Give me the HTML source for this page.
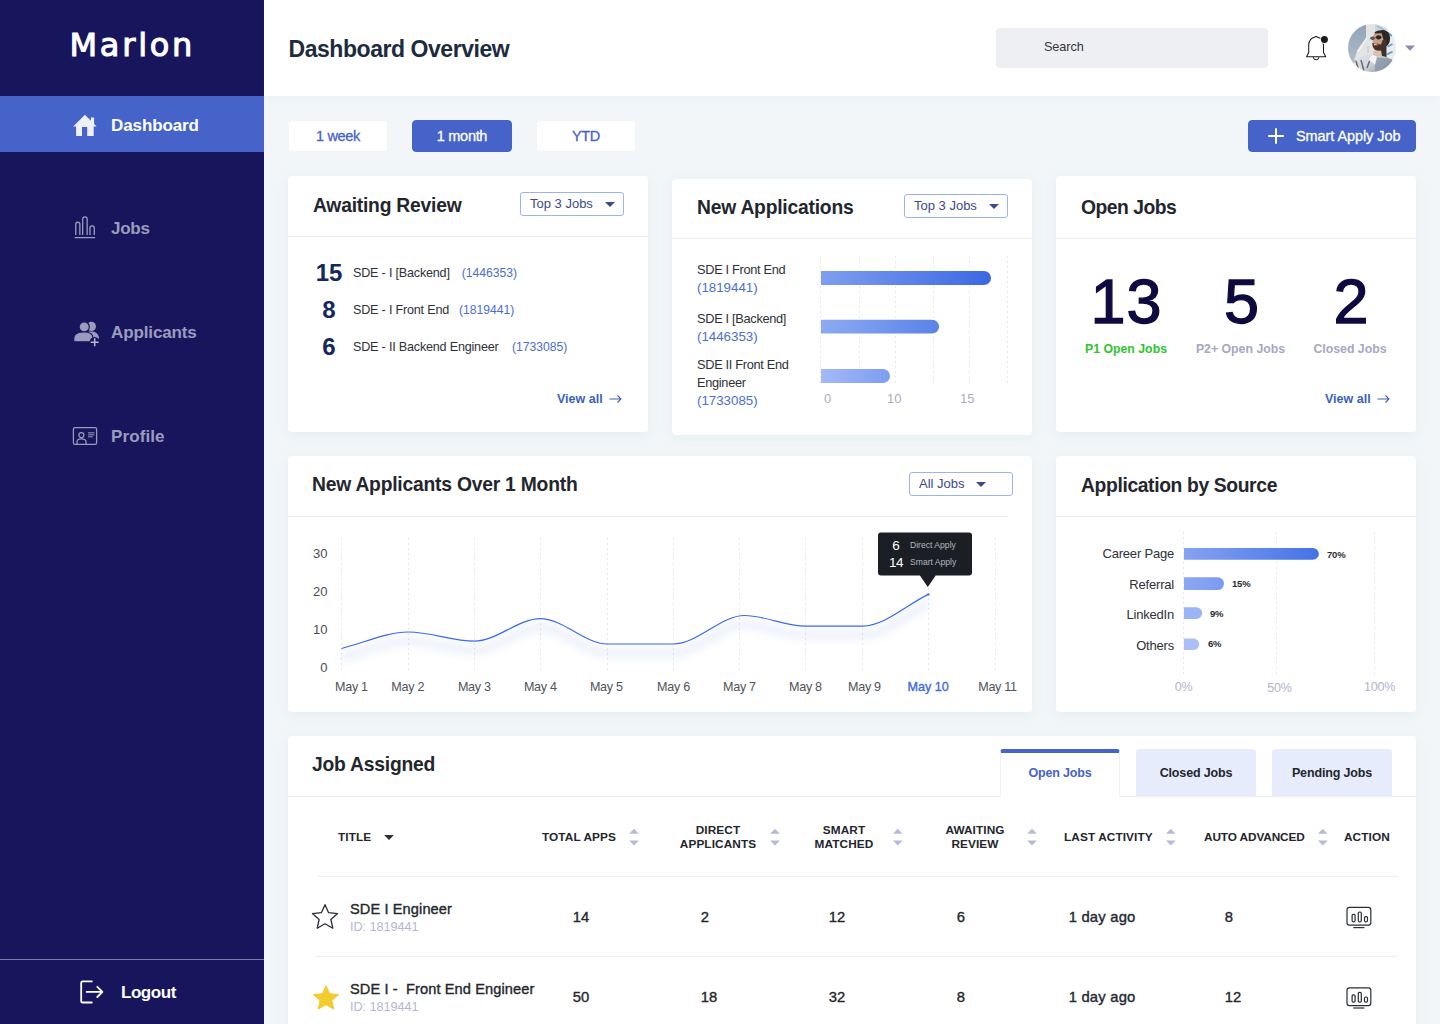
<!DOCTYPE html>
<html lang="en">
<head>
<meta charset="utf-8">
<title>Marlon - Dashboard Overview</title>
<style>
*{box-sizing:border-box;margin:0;padding:0}
html,body{width:1440px;height:1024px;overflow:hidden}
body{font-family:"Liberation Sans",Arial,sans-serif;background:#f2f6f9;color:#23262d;position:relative}
.abs{position:absolute}
.t{position:absolute;white-space:nowrap;line-height:1}
/* sidebar */
#side{position:absolute;left:0;top:0;width:264px;height:1024px;background:#17165d}
#side .active{position:absolute;left:0;top:96px;width:264px;height:56px;background:#4563c9}
#side .logo{left:69.5px;top:29px;font-family:"DejaVu Sans","Liberation Sans",sans-serif;font-size:32px;color:#fff;letter-spacing:2.75px;font-weight:400;-webkit-text-stroke:1.05px #fff}
#side .nav{font-size:17px;font-weight:700;color:#9b9cbd;left:111px}
#side .logoutline{position:absolute;left:0;top:959px;width:264px;height:1px;background:#7a79a8}
/* header */
#head{position:absolute;left:264px;top:0;width:1176px;height:96px;background:#fff;box-shadow:0 2px 8px rgba(120,140,170,.06)}
#head .title{left:24.5px;top:38px;font-size:23px;font-weight:700;color:#1d2b3e;letter-spacing:-0.45px}
#search{position:absolute;left:996px;top:28px;width:272px;height:40px;background:#eeeff3;border-radius:4px}
/* buttons */
.btn{position:absolute;top:120px;height:32px;width:100px;border-radius:4px;background:#fff;border:1px solid #f1f3f7;color:#4563c9;font-size:14.5px;text-align:center;line-height:30px;letter-spacing:-0.3px;-webkit-text-stroke:0.3px currentColor}
.btn.on{background:#4563c9;border-color:#4563c9;color:#fff}
/* cards */
.card{position:absolute;background:#fff;border-radius:4px;box-shadow:0 2px 10px rgba(195,208,222,.26)}
.card .hl{position:absolute;left:0;right:0;height:1px;background:#ecedf0}
.ctitle{font-size:19.3px;font-weight:700;color:#23262d;letter-spacing:-0.22px}
.dd{position:absolute;height:24px;border:1px solid #9db3ee;border-radius:3px;background:#fff;font-size:13px;color:#3c4a8a;line-height:22px;padding-left:9px}
.dd i{position:absolute;top:9px;width:0;height:0;border-left:5px solid transparent;border-right:5px solid transparent;border-top:5px solid #3c4a8a}
.viewall{font-size:12.5px;font-weight:700;color:#3d5fc4}
.num{font-weight:700;font-size:24px;color:#14275e;text-align:center}
.row{font-size:12.6px;color:#2e3138;letter-spacing:-0.2px}
.row span{color:#4a6fd0;font-size:12.15px;letter-spacing:0}
.lab{font-size:12.8px;color:#2e3138;letter-spacing:-0.32px}
.lab.b{color:#4a6fd0;font-size:13.3px;letter-spacing:0}
.big{font-size:63px;color:#0d0a3f;text-align:center;-webkit-text-stroke:1.3px #0d0a3f;letter-spacing:1px}
.sub{font-size:12.3px;font-weight:700;color:#a6a7c3;text-align:center}
.tab{position:absolute;width:120px;height:47px;background:#e6ecfb;border-radius:3px 3px 0 0;font-size:12.5px;font-weight:700;color:#23262d;text-align:center;line-height:48.5px;letter-spacing:-0.15px}
.tab.on{background:#fff;color:#4563c9;border:1px solid #f0f1f5;border-bottom:none;border-top:4px solid #4563c9;line-height:40px;height:48px}
.th{font-size:11.8px;font-weight:700;color:#23262d;letter-spacing:0.1px;line-height:14px}
.th.c{text-align:center}
.jt{font-size:14.6px;color:#23262d;letter-spacing:0.1px;-webkit-text-stroke:0.35px #23262d}
.jid{font-size:12.6px;color:#b3b7d3}
.td{font-size:14.8px;color:#23262d;letter-spacing:0.2px;-webkit-text-stroke:0.35px #23262d}
</style>
</head>
<body>

<!-- SIDEBAR -->
<div id="side">
  <div class="t logo">Marlon</div>
  <div class="active"></div>
  <div class="t nav" style="top:116.9px;color:#fff;letter-spacing:-0.1px">Dashboard</div>
  <div class="t nav" style="top:220.4px;letter-spacing:-0.25px">Jobs</div>
  <div class="t nav" style="top:323.6px;letter-spacing:-0.12px">Applicants</div>
  <div class="t nav" style="top:427.6px;letter-spacing:0.1px">Profile</div>
  <div class="logoutline"></div>
  <svg class="abs" style="left:0;top:0" width="264" height="1024" viewBox="0 0 264 1024" fill="none">
    <!-- home -->
    <path d="M73.2 126.6 L84.9 114.7 L90.9 120.8 V117.6 H94.1 V124 L96.7 126.6 H93.7 V136 H87.2 V127 H82 V136 H76.1 V126.6 Z" fill="#eef0fa"/>
    <!-- jobs -->
    <g stroke="#9b9cbd" stroke-width="1.3">
      <path d="M75.75 234.9 V224.3 a2.05 2.05 0 0 1 4.1 0 V234.9"/>
      <path d="M82.65 234.9 V219.1 a2.25 2.25 0 0 1 4.5 0 V234.9"/>
      <path d="M89.95 234.9 V228.1 a2.15 2.15 0 0 1 4.3 0 V234.9"/>
      <path d="M74.6 237.6 H95.2"/>
    </g>
    <!-- applicants -->
    <g fill="#9b9cbd">
      <circle cx="91.4" cy="326.4" r="4.6"/>
      <path d="M84 341.9 V337 C84 333 87 331.4 91.4 331.4 C96 331.4 99 334 99 338.6 V341.9 Z"/>
      <circle cx="84.2" cy="326.9" r="5.1" stroke="#17165d" stroke-width="1.2"/>
      <path d="M73.75 341.9 V338.2 C73.75 334 78 332 84.2 332 C90 332 93.1 334.4 93.1 338.2 V341.9 Z" stroke="#17165d" stroke-width="1.2"/>
      <rect x="73" y="341.9" width="22" height="2" fill="#17165d"/>
      <circle cx="94.7" cy="342.2" r="5.2" fill="#17165d"/>
      <path d="M94.7 338.2 V346.2 M90.7 342.2 H98.7" stroke="#b5b6d0" stroke-width="1.5"/>
    </g>
    <!-- profile -->
    <g stroke="#9b9cbd" stroke-width="1.25">
      <rect x="73.4" y="427.6" width="23.2" height="16.8" rx="1.6"/>
      <circle cx="81.4" cy="435.1" r="2.5"/>
      <path d="M77 444 V441.8 a4.5 2.9 0 0 1 9 0 V444"/>
      <path d="M88.1 432.8 H94.4 M88.1 434.8 H94.4 M88.1 436.8 H92.8" stroke-width="1"/>
    </g>
    <!-- logout -->
    <g stroke="#fff" stroke-width="1.8" stroke-linecap="round" stroke-linejoin="round">
      <path d="M91.8 981.4 H82.8 a1.6 1.6 0 0 0 -1.6 1.6 V1000.9 a1.6 1.6 0 0 0 1.6 1.6 H91.8"/>
      <path d="M86.6 991.9 H102.2 M97.3 986.8 L102.4 991.9 L97.3 997"/>
    </g>
  </svg>
  <div class="t nav" style="top:984.4px;left:121px;color:#fff;letter-spacing:-0.45px">Logout</div>
</div>

<!-- HEADER -->
<div id="head">
  <div class="t title">Dashboard Overview</div>
</div>
<div id="search"><div class="t" style="left:48px;top:13px;font-size:12.7px;color:#33363d;letter-spacing:-0.1px">Search</div></div>

<svg class="abs" style="left:1296px;top:16px" width="128" height="64" viewBox="1296 16 128 64" fill="none">
  <defs>
    <clipPath id="avc"><circle cx="1372" cy="48" r="24"/></clipPath>
    <filter id="avb" x="-10%" y="-10%" width="120%" height="120%"><feGaussianBlur stdDeviation="0.55"/></filter>
    <linearGradient id="sky" x1="0" y1="0" x2="0" y2="1"><stop offset="0" stop-color="#8da3b7"/><stop offset="1" stop-color="#b9c3cc"/></linearGradient>
    <linearGradient id="shirt" x1="0" y1="0" x2="1" y2="0.6"><stop offset="0" stop-color="#dfe2e6"/><stop offset="0.45" stop-color="#d5d9df"/><stop offset="1" stop-color="#7d8b9c"/></linearGradient>
  </defs>
  <!-- bell -->
  <path d="M1306.6 56.7 H1325.7 L1323.5 52.6 V45 C1323.5 40.6 1320.6 37.6 1317.6 37.3 C1317.4 36.3 1314.8 36.3 1314.6 37.3 C1311.6 37.6 1308.7 40.6 1308.7 45 V52.6 Z" stroke="#1a1a1a" stroke-width="1.05" stroke-linejoin="round"/>
  <path d="M1313.3 57.2 a2.8 2.6 0 0 0 5.6 0" stroke="#1a1a1a" stroke-width="1"/>
  <circle cx="1324.4" cy="39.5" r="4.3" fill="#fff"/>
  <circle cx="1324.4" cy="39.5" r="3.5" fill="#1b1b1f"/>
  <!-- avatar -->
  <g clip-path="url(#avc)">
    <g filter="url(#avb)" transform="translate(1348 24)">
      <rect x="-2" y="-2" width="52" height="52" fill="url(#sky)"/>
      <polygon points="18,-2 18,14 9,27 6,36 34,36 34,-2" fill="#e2e4e6"/>
      <polygon points="18,14 19.5,14 11,28 9,27" fill="#f2f2f2"/>
      <rect x="19.6" y="22" width="0.9" height="7" fill="#b9bec4"/>
      <rect x="27" y="-2" width="12" height="10" fill="#c9d5df"/>
      <path d="M29 2 L36 6 M33 0 L40 5" stroke="#8fb4cf" stroke-width="1.4"/>
      <rect x="37" y="6" width="14" height="40" fill="#e9edf0"/>
      <path d="M39.5 22.6 L44.5 20 M39 30.4 L44.5 27.6 M40 9 L44 12" stroke="#6da0c6" stroke-width="1.9"/>
      <ellipse cx="35.5" cy="14.5" rx="6.6" ry="8.6" fill="#2e2623"/>
      <path d="M26.6 8.2 C30 5.4 38 5.2 41 9.5 L41.6 15 L36 15 L33.5 10.5 L27.5 11 Z" fill="#2e2623"/>
      <path d="M26.4 9.5 L33.6 9.2 L35.5 16 L34 21 L27 21 L24.6 18 L24.8 13 Z" fill="#c7a08a"/>
      <path d="M24.2 19 C24.5 25.5 28 27.2 32 26.8 C36 26.4 38.5 23 38.5 16 L34.6 16 L33 20.6 L27 19.6 Z" fill="#4a3329"/>
      <path d="M25.4 19.4 L30.4 19.2 L30 21.6 L26.4 21.9 Z" fill="#9a6448"/>
      <ellipse cx="24.5" cy="14.3" rx="2.3" ry="1.8" fill="#5a5453"/>
      <ellipse cx="30.7" cy="13.3" rx="2.7" ry="2.1" fill="#2a2626"/>
      <path d="M26.8 13.8 L28.2 13.5" stroke="#3a3433" stroke-width="0.7"/>
      <path d="M26 20.5 L28.6 20" stroke="#f4ece8" stroke-width="0.9"/>
      <path d="M25.6 26.4 L33.4 27.2 L34.5 33 L24.5 32 Z" fill="#dcc0a8"/>
      <path d="M33 26.2 L38.4 21 L38.6 34 L34.2 33 Z" fill="#3b302e"/>
      <path d="M5 41 C8 34 16 31 24.5 30.6 L29 32.6 L34 32 C39 32.4 43 34.6 47 40 L47 52 L5 52 Z" fill="url(#shirt)"/>
      <path d="M27 33 L44 35 L47 52 L27 52 Z" fill="#8796a7" opacity="0.75"/>
      <path d="M24.5 30.6 L29 33 L27 41 L21 35 Z" fill="#f3f3f4"/>
      <path d="M8 37 L10.5 46 M13 36 L16 47 M19 44 L21.5 37" stroke="#646b77" stroke-width="1.5"/>
    </g>
  </g>
  <!-- caret -->
  <path d="M1405 45.6 H1415 L1410 50.8 Z" fill="#8e8ab4"/>
</svg>

<!-- FILTER BUTTONS -->
<div class="btn" style="left:288px">1 week</div>
<div class="btn on" style="left:412px">1 month</div>
<div class="btn" style="left:536px">YTD</div>
<div class="btn on" style="left:1248px;width:168px;text-align:left;padding-left:47px;letter-spacing:-0.08px">Smart Apply Job</div>

<svg class="abs" style="left:1266px;top:126px" width="20" height="20" viewBox="0 0 20 20" fill="none" stroke="#fff" stroke-width="2"><path d="M10 2.2 V17.8 M2.2 10 H17.8"/></svg>

<!-- CARD 1 -->
<div class="card" id="c1" style="left:288px;top:176px;width:360px;height:256px">
  <div class="t ctitle" style="left:25px;top:20px">Awaiting Review</div>
  <div class="dd" style="left:232px;top:16px;width:104px">Top 3 Jobs<i style="left:84px"></i></div>
  <div class="hl" style="top:60px"></div>
  <div class="t num" style="left:17px;top:85px;width:48px">15</div>
  <div class="t num" style="left:17px;top:122px;width:48px">8</div>
  <div class="t num" style="left:17px;top:159px;width:48px">6</div>
  <div class="t row" style="left:65px;top:91px">SDE - I [Backend]<span style="margin-left:12px">(1446353)</span></div>
  <div class="t row" style="left:65px;top:128px">SDE - I Front End<span style="margin-left:10px">(1819441)</span></div>
  <div class="t row" style="left:65px;top:165px">SDE - II Backend Engineer<span style="margin-left:13.5px">(1733085)</span></div>
  <div class="t viewall" style="left:269px;top:217px">View all</div>
  <svg class="abs" style="left:320px;top:217px" width="16" height="12" viewBox="0 0 16 12" fill="none" stroke="#3d5fc4" stroke-width="1.1"><path d="M1.5 6 H13 M9.5 2.5 L13 6 L9.5 9.5"/></svg>
</div>

<!-- CARD 2 -->
<div class="card" id="c2" style="left:672px;top:179px;width:360px;height:256px">
  <div class="t ctitle" style="left:25px;top:19px">New Applications</div>
  <div class="dd" style="left:232px;top:15px;width:104px">Top 3 Jobs<i style="left:84px"></i></div>
  <div class="hl" style="top:59px"></div>
  <div class="t lab" style="left:25px;top:85px">SDE I Front End</div>
  <div class="t lab b" style="left:25px;top:101.8px">(1819441)</div>
  <div class="t lab" style="left:25px;top:134px">SDE I [Backend]</div>
  <div class="t lab b" style="left:25px;top:150.8px">(1446353)</div>
  <div class="t lab" style="left:25px;top:180px">SDE II Front End</div>
  <div class="t lab" style="left:25px;top:198px">Engineer</div>
  <div class="t lab b" style="left:25px;top:214.8px">(1733085)</div>
  <svg class="abs" style="left:0;top:0" width="360" height="256" viewBox="672 179 360 256">
    <defs>
      <linearGradient id="g1" x1="0" y1="0" x2="1" y2="0"><stop offset="0" stop-color="#7f9ef0"/><stop offset="1" stop-color="#3b68e3"/></linearGradient>
      <linearGradient id="g2" x1="0" y1="0" x2="1" y2="0"><stop offset="0" stop-color="#8eaaf3"/><stop offset="1" stop-color="#5a82e8"/></linearGradient>
      <linearGradient id="g3" x1="0" y1="0" x2="1" y2="0"><stop offset="0" stop-color="#a3baf6"/><stop offset="1" stop-color="#7d9df0"/></linearGradient>
    </defs>
    <g stroke="#e6e8ee" stroke-width="1" stroke-dasharray="2 3">
      <path d="M820.5 256 V383 M859.5 256 V383 M895.5 256 V383 M933.5 256 V383 M969.5 256 V383 M1007.5 256 V383"/>
    </g>
    <path d="M821 271 H984 a7 7 0 0 1 0 14 H821 Z" fill="url(#g1)"/>
    <path d="M821 319.8 H932.2 a6.9 6.9 0 0 1 0 13.8 H821 Z" fill="url(#g2)"/>
    <path d="M821 369 H883 a7 7 0 0 1 0 14 H821 Z" fill="url(#g3)"/>
    <g font-size="13" fill="#a9adc2" font-family="Liberation Sans, sans-serif">
      <text x="824" y="403">0</text><text x="887" y="403">10</text><text x="960" y="403">15</text>
    </g>
  </svg>
</div>

<!-- CARD 3 -->
<div class="card" id="c3" style="left:1056px;top:176px;width:360px;height:256px">
  <div class="t ctitle" style="left:25px;top:22px;letter-spacing:-0.48px">Open Jobs</div>
  <div class="hl" style="top:62px"></div>
  <div class="t big" style="left:20.5px;top:94px;width:100px">13</div>
  <div class="t big" style="left:136px;top:94px;width:100px">5</div>
  <div class="t big" style="left:245.5px;top:94px;width:100px">2</div>
  <div class="t sub" style="left:20px;top:166.5px;width:100px;color:#2fc52f">P1 Open Jobs</div>
  <div class="t sub" style="left:134.5px;top:166.5px;width:100px">P2+ Open Jobs</div>
  <div class="t sub" style="left:244px;top:166.5px;width:100px">Closed Jobs</div>
  <div class="t viewall" style="left:269px;top:217px">View all</div>
  <svg class="abs" style="left:320px;top:217px" width="16" height="12" viewBox="0 0 16 12" fill="none" stroke="#3d5fc4" stroke-width="1.1"><path d="M1.5 6 H13 M9.5 2.5 L13 6 L9.5 9.5"/></svg>
</div>

<!-- CARD 4 -->
<div class="card" id="c4" style="left:288px;top:456px;width:744px;height:256px">
  <div class="t ctitle" style="left:24px;top:19px">New Applicants Over 1 Month</div>
  <div class="dd" style="left:621px;top:16px;width:104px">All Jobs<i style="left:66px"></i></div>
  <div class="hl" style="top:60px;right:24px"></div>
  <svg class="abs" style="left:0;top:0" width="744" height="256" viewBox="288 456 744 256" font-family="Liberation Sans, sans-serif">
    <defs><filter id="glow" x="-5%" y="-50%" width="110%" height="250%"><feGaussianBlur stdDeviation="4.5"/></filter></defs>
    <path d="M341.5 538 V671 M408.5 538 V671 M474.5 538 V671 M540.5 538 V671 M607.5 538 V671 M673.5 538 V671 M739.5 538 V671 M805.5 538 V671 M862.5 538 V671 M928.5 538 V671 M995.5 538 V671" stroke="#e6e8ee" stroke-width="1" stroke-dasharray="2 3" fill="none"/>
    <g font-size="13" fill="#4a4d55" text-anchor="end"><text x="327.5" y="558">30</text><text x="327.5" y="596">20</text><text x="327.5" y="634">10</text><text x="327.5" y="672">0</text></g>
    <g font-size="12.6" fill="#50535b" text-anchor="middle" letter-spacing="-0.3"><text x="351.4" y="691">May 1</text><text x="407.7" y="691">May 2</text><text x="474.3" y="691">May 3</text><text x="540.3" y="691">May 4</text><text x="606.3" y="691">May 5</text><text x="673.5" y="691">May 6</text><text x="739.4" y="691">May 7</text><text x="805.4" y="691">May 8</text><text x="864.4" y="691">May 9</text><text x="928.2" y="691" fill="#3f6ad8" stroke="#3f6ad8" stroke-width="0.35" letter-spacing="0">May 10</text><text x="997.5" y="691">May 11</text></g>
    <path d="M341.5 648.5 C363.8 643.0 386.2 632.0 408.5 632.0 C430.5 632.0 452.5 641.1 474.5 641.1 C496.5 641.1 518.4 618.6 540.4 618.6 C562.7 618.6 584.9 644.0 607.2 644.0 C629.3 644.0 651.4 644.0 673.5 644.0 C697.2 644.0 720.8 615.5 744.5 615.5 C764.8 615.5 785.1 626.1 805.4 626.1 C824.4 626.1 843.4 626.1 862.4 626.1 C884.4 626.1 906.3 605.0 928.3 594.4" transform="translate(0 9)" stroke="#3f6ad8" stroke-opacity="0.16" stroke-width="5" fill="none" filter="url(#glow)"/>
    <path d="M341.5 648.5 C363.8 643.0 386.2 632.0 408.5 632.0 C430.5 632.0 452.5 641.1 474.5 641.1 C496.5 641.1 518.4 618.6 540.4 618.6 C562.7 618.6 584.9 644.0 607.2 644.0 C629.3 644.0 651.4 644.0 673.5 644.0 C697.2 644.0 720.8 615.5 744.5 615.5 C764.8 615.5 785.1 626.1 805.4 626.1 C824.4 626.1 843.4 626.1 862.4 626.1 C884.4 626.1 906.3 605.0 928.3 594.4" stroke="#3a6ae6" stroke-width="1.2" fill="none"/>
    <circle cx="928.3" cy="594.4" r="1.2" fill="#3a6ae6"/>
    <path d="M881 532.4 H969 a3 3 0 0 1 3 3 V572.4 a3 3 0 0 1 -3 3 H935.7 L927.8 587 L919.9 575.4 H881 a3 3 0 0 1 -3 -3 V535.4 a3 3 0 0 1 3 -3 Z" fill="#1b1e24"/>
    <g fill="#fff" font-size="13.5" text-anchor="middle"><text x="895.9" y="549.8">6</text><text x="895.9" y="566.8" letter-spacing="-0.6">14</text></g>
    <g fill="#b4b7bf" font-size="8.6"><text x="910" y="548">Direct Apply</text><text x="910" y="565">Smart Apply</text></g>
  </svg>
</div>

<!-- CARD 5 -->
<div class="card" id="c5" style="left:1056px;top:456px;width:360px;height:256px">
  <div class="t ctitle" style="left:25px;top:20px;letter-spacing:-0.36px">Application by Source</div>
  <div class="hl" style="top:60px"></div>
  <svg class="abs" style="left:0;top:0" width="360" height="256" viewBox="1056 456 360 256" font-family="Liberation Sans, sans-serif">
    <defs>
      <linearGradient id="h1" x1="0" y1="0" x2="1" y2="0"><stop offset="0" stop-color="#86a3f1"/><stop offset="1" stop-color="#4472e6"/></linearGradient>
      <linearGradient id="h2" x1="0" y1="0" x2="1" y2="0"><stop offset="0" stop-color="#8ca8f2"/><stop offset="1" stop-color="#7b9bf0"/></linearGradient>
    </defs>
    <path d="M1183.5 532 V674 M1276.5 532 V674 M1374.5 532 V674" stroke="#e6e8ee" stroke-width="1" stroke-dasharray="2 3" fill="none"/>
    <g font-size="13" fill="#2e3138" text-anchor="end" letter-spacing="-0.2">
      <text x="1174" y="558">Career Page</text><text x="1174" y="589">Referral</text><text x="1174" y="619">LinkedIn</text><text x="1174" y="650">Others</text>
    </g>
    <path d="M1184 548 H1313 a5.9 5.9 0 0 1 0 11.8 H1184 Z" fill="url(#h1)"/>
    <path d="M1184 577.2 H1217.6 a6.4 6.4 0 0 1 0 12.8 H1184 Z" fill="url(#h2)"/>
    <path d="M1184 607.2 H1196.3 a5.9 5.9 0 0 1 0 11.8 H1184 Z" fill="#9bb4f5"/>
    <path d="M1184 638.6 H1193.5 a5.7 5.7 0 0 1 0 11.4 H1184 Z" fill="#aabff6"/>
    <g font-size="9.5" font-weight="700" fill="#2a2d34" letter-spacing="-0.2">
      <text x="1327" y="557.6">70%</text><text x="1232" y="586.6">15%</text><text x="1210" y="616.6">9%</text><text x="1208" y="646.6">6%</text>
    </g>
    <g font-size="12.5" fill="#b0b4cc" text-anchor="middle" letter-spacing="-0.2">
      <text x="1183.5" y="691">0%</text><text x="1279.5" y="691.5">50%</text><text x="1379.5" y="691">100%</text>
    </g>
  </svg>
</div>

<!-- CARD 6 -->
<div class="card" id="c6" style="left:288px;top:736px;width:1128px;height:300px">
  <div class="t ctitle" style="left:24px;top:19px">Job Assigned</div>
  <div class="hl" style="top:60px"></div>
  <svg class="abs" style="left:0;top:0" width="1128" height="288" viewBox="288 736 1128 288" fill="none">
    <path d="M318 876.3 H1399 M316 956.3 H1397" stroke="#ebecef" stroke-width="1"/>
    <path d="M384.2 835 H393.9 L389.05 839.9 Z" fill="#2a2d34"/>
    <g fill="#b7bad4"><path d="M629.2 833.8 L634.0 828.8 L638.8 833.8 Z M629.2 840.4 L634.0 845.4 L638.8 840.4 Z"/><path d="M770.2 833.8 L775.0 828.8 L779.8 833.8 Z M770.2 840.4 L775.0 845.4 L779.8 840.4 Z"/><path d="M893.0 833.8 L897.8 828.8 L902.6 833.8 Z M893.0 840.4 L897.8 845.4 L902.6 840.4 Z"/><path d="M1027.2 833.8 L1032.0 828.8 L1036.8 833.8 Z M1027.2 840.4 L1032.0 845.4 L1036.8 840.4 Z"/><path d="M1166.0 833.8 L1170.8 828.8 L1175.6 833.8 Z M1166.0 840.4 L1170.8 845.4 L1175.6 840.4 Z"/><path d="M1318.0 833.8 L1322.8 828.8 L1327.6 833.8 Z M1318.0 840.4 L1322.8 845.4 L1327.6 840.4 Z"/></g>
    <path transform="translate(325 917.3)" d="M0 -12.6 L3.6 -4.6 L12.6 -3.7 L5.9 2.2 L7.8 10.9 L0 6.4 L-7.8 10.9 L-5.9 2.2 L-12.6 -3.7 L-3.6 -4.6 Z" stroke="#2a2d34" stroke-width="1.3" stroke-linejoin="round"/>
    <path transform="translate(326 998.3)" d="M0 -12.6 L3.6 -4.6 L12.6 -3.7 L5.9 2.2 L7.8 10.9 L0 6.4 L-7.8 10.9 L-5.9 2.2 L-12.6 -3.7 L-3.6 -4.6 Z" fill="#f2cc2e" stroke="#f2cc2e" stroke-width="1" stroke-linejoin="round"/>
    <g stroke="#2a2d34" stroke-width="1.2"><g transform="translate(0 906.8)"><rect x="1347" y="0.6" width="23.8" height="17.8" rx="2.4"/><rect x="1352.1" y="7.6" width="3" height="7.4" rx="1.2"/><rect x="1358.3" y="5.2" width="3" height="9.8" rx="1.2"/><rect x="1364.5" y="9.8" width="3" height="5.2" rx="1.2"/><path d="M1353.3 20.8 H1364.4"/></g><g transform="translate(0 987.2)"><rect x="1347" y="0.6" width="23.8" height="17.8" rx="2.4"/><rect x="1352.1" y="7.6" width="3" height="7.4" rx="1.2"/><rect x="1358.3" y="5.2" width="3" height="9.8" rx="1.2"/><rect x="1364.5" y="9.8" width="3" height="5.2" rx="1.2"/><path d="M1353.3 20.8 H1364.4"/></g></g>
  </svg>
  <div class="tab on" style="left:712px;top:13px">Open Jobs</div>
  <div class="tab" style="left:848px;top:13px">Closed Jobs</div>
  <div class="tab" style="left:984px;top:13px">Pending Jobs</div>
  <div class="t th" style="left:50px;top:93.8px">TITLE</div>
  <div class="t th" style="left:254px;top:93.8px">TOTAL APPS</div>
  <div class="t th c" style="left:380px;top:87px;width:100px">DIRECT<br>APPLICANTS</div>
  <div class="t th c" style="left:506px;top:87px;width:100px">SMART<br>MATCHED</div>
  <div class="t th c" style="left:637px;top:87px;width:100px">AWAITING<br>REVIEW</div>
  <div class="t th" style="left:776px;top:93.8px">LAST ACTIVITY</div>
  <div class="t th" style="left:916px;top:93.8px;letter-spacing:-0.1px">AUTO ADVANCED</div>
  <div class="t th" style="left:1056px;top:93.8px">ACTION</div>

  <div class="t jt" style="left:62px;top:166px">SDE I Engineer</div>
  <div class="t jid" style="left:62px;top:184.9px">ID: 1819441</div>
  <div class="t td" style="left:284.7px;top:174px">14</div>
  <div class="t td" style="left:412.7px;top:174px">2</div>
  <div class="t td" style="left:540.7px;top:174px">12</div>
  <div class="t td" style="left:668.7px;top:174px">6</div>
  <div class="t td" style="left:780.7px;top:174px">1 day ago</div>
  <div class="t td" style="left:936.7px;top:174px">8</div>

  <div class="t jt" style="left:62px;top:246px">SDE I -&nbsp; Front End Engineer</div>
  <div class="t jid" style="left:62px;top:264.9px">ID: 1819441</div>
  <div class="t td" style="left:284.7px;top:254px">50</div>
  <div class="t td" style="left:412.7px;top:254px">18</div>
  <div class="t td" style="left:540.7px;top:254px">32</div>
  <div class="t td" style="left:668.7px;top:254px">8</div>
  <div class="t td" style="left:780.7px;top:254px">1 day ago</div>
  <div class="t td" style="left:936.7px;top:254px">12</div>
</div>

</body>
</html>
